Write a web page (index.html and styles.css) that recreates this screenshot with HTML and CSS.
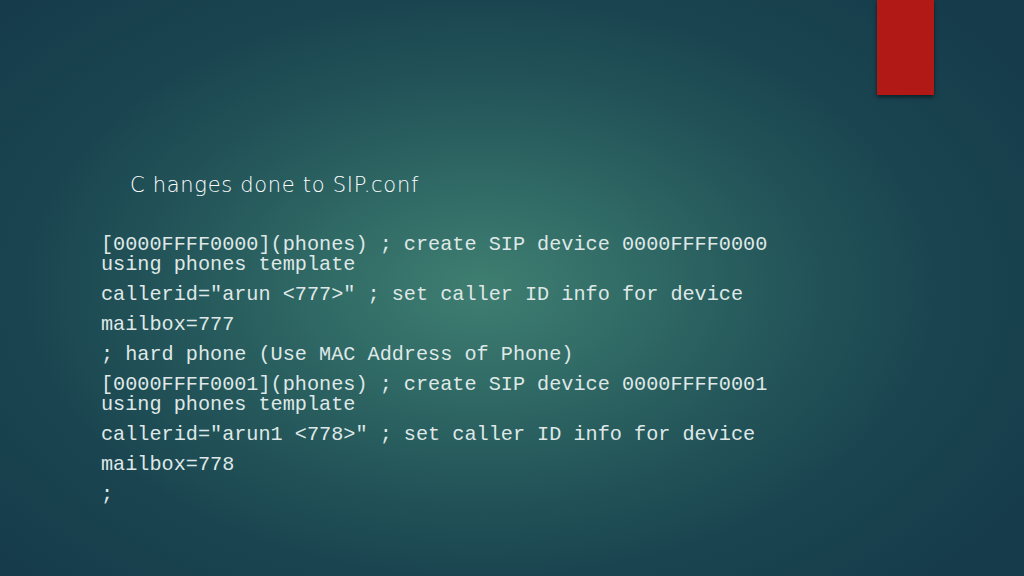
FILE: index.html
```html
<!DOCTYPE html>
<html lang="en">
<head>
    <meta charset="UTF-8">
    <meta name="viewport" content="width=device-width, initial-scale=1.0">
    <title>Changes done to SIP.conf</title>
    <link rel="stylesheet" href="styles.css">
</head>
<body>
    <div class="slide">
        <div class="accent"></div>

        <h1 class="title">C hanges done to SIP.conf</h1>

        <div class="code">
            <p>[0000FFFF0000](phones) ; create SIP device 0000FFFF0000 using phones template</p>
            <p>callerid="arun &lt;777&gt;" ; set caller ID info for device</p>
            <p>mailbox=777</p>
            <p>; hard phone (Use MAC Address of Phone)</p>
            <p>[0000FFFF0001](phones) ; create SIP device 0000FFFF0001 using phones template</p>
            <p>callerid="arun1 &lt;778&gt;" ; set caller ID info for device</p>
            <p>mailbox=778</p>
            <p>;</p>
        </div>
    </div>
</body>
</html>
```

FILE: styles.css
```css
body, html {
    margin: 0;
    padding: 0;
    background-color: #163c4b;
}

.slide {
    position: relative;
    width: 1024px;
    height: 576px;
    box-sizing: border-box;
    padding: 173px 0 0 101px;
    overflow: hidden;
    background: radial-gradient(ellipse 62% 70% at 47% 50%, #3f7e71 0%, #326d67 22%, #24565a 48%, #1a4550 72%, #163c4b 100%);
}

/* red tab hanging from the top edge */
.accent {
    position: absolute;
    top: 0;
    left: 877px;
    width: 57px;
    height: 95px;
    background-color: #b11917;
    box-shadow: 0 2px 4px rgba(0, 0, 0, 0.55);
}

.title {
    margin: 0 0 0 29px;
    font-family: "DejaVu Sans", sans-serif;
    font-weight: 200;
    font-size: 21px;
    letter-spacing: 0.7px;
    line-height: 24px;
    color: #ffffff;
}

.code {
    margin-top: 38px;
    font-family: "Courier New", "Nimbus Mono PS", "FreeMono", Courier, "Liberation Mono", monospace;
    font-size: 20.2px;
    color: #dfe8e7;
}

.code p {
    margin: 0 0 10px;
    line-height: 20px;
    max-width: 700px;
}
```
